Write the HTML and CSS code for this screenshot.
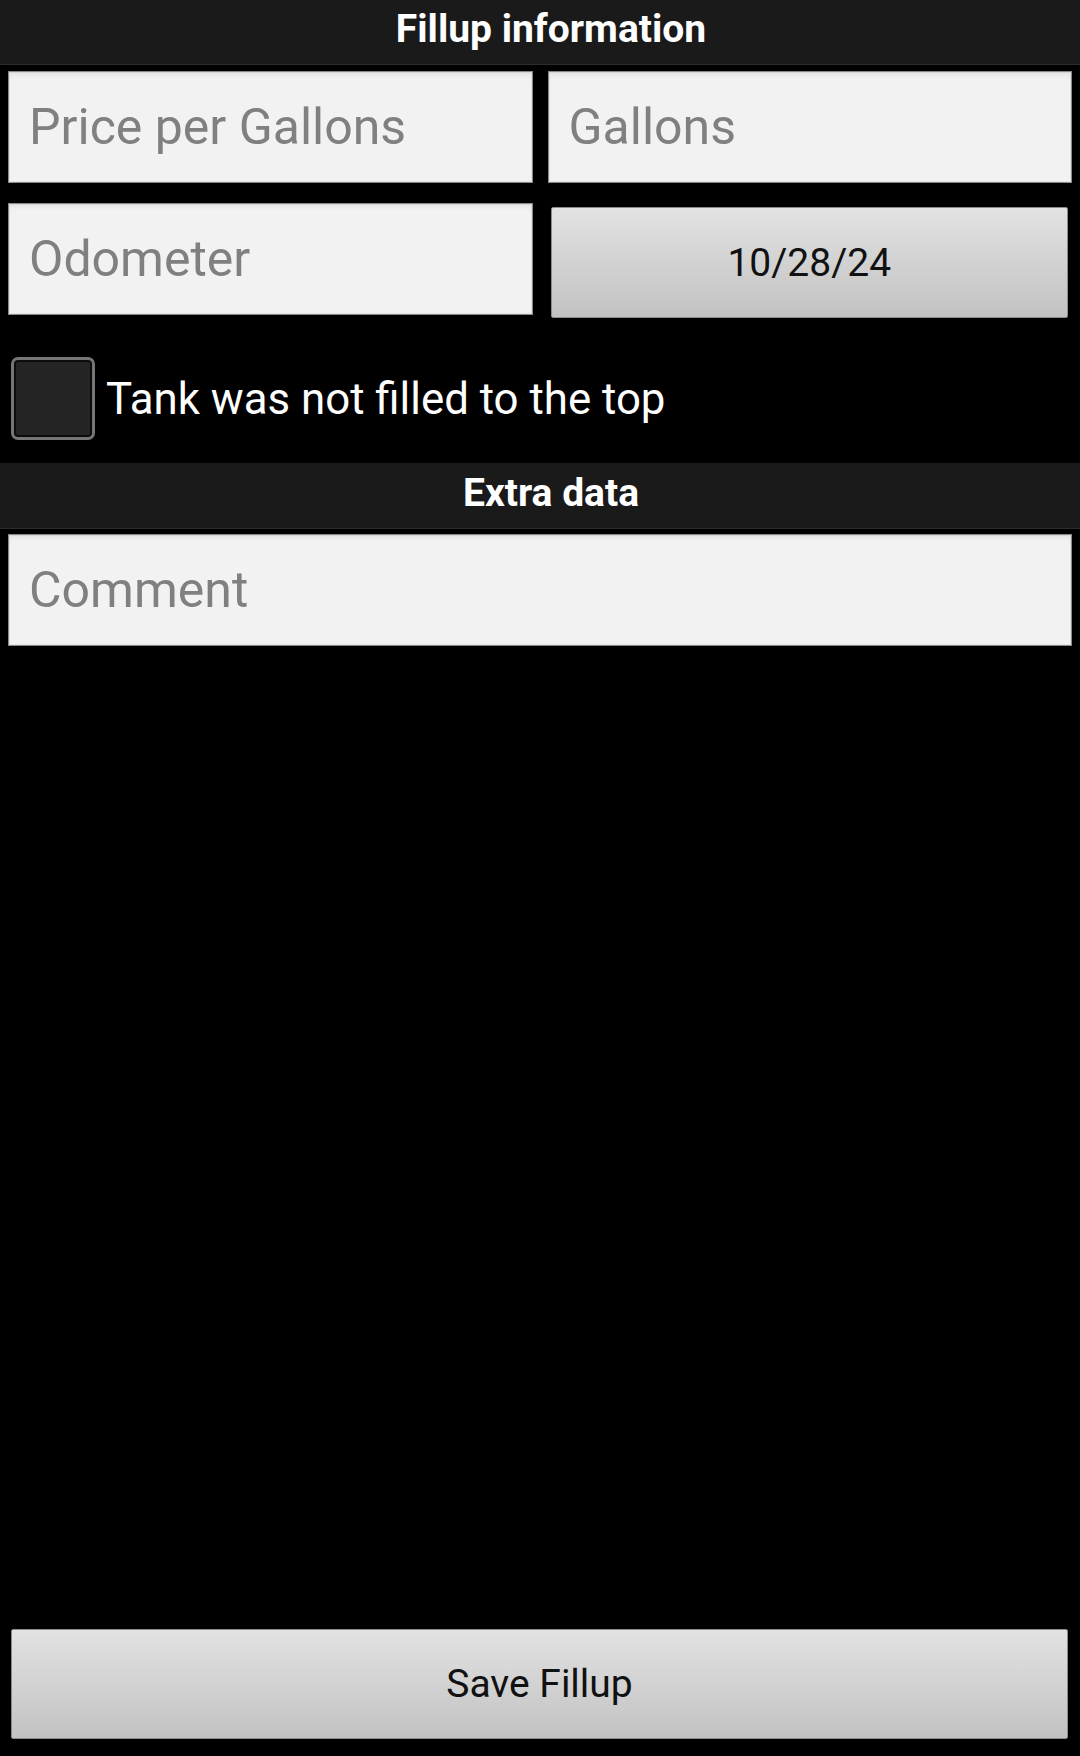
FILE: index.html
```html
<!DOCTYPE html>
<html>
<head>
<meta charset="utf-8">
<link rel="stylesheet" href="styles.css">
</head>
<body>
<div class="screen">
  <div class="section-header">Fillup information</div>
  <div class="row row-first">
    <div class="field"><span class="placeholder">Price per Gallons</span></div>
    <div class="field"><span class="placeholder">Gallons</span></div>
  </div>
  <div class="row row-second">
    <div class="field"><span class="placeholder">Odometer</span></div>
    <div class="btn btn-date">10/28/24</div>
  </div>
  <div class="check-row">
    <div class="checkbox"></div>
    <div class="check-label">Tank was not filled to the top</div>
  </div>
  <div class="section-header section-extra">Extra data</div>
  <div class="row-single">
    <div class="field"><span class="placeholder">Comment</span></div>
  </div>
  <div class="spacer"></div>
  <div class="btn btn-save">Save Fillup</div>
</div>
</body>
</html>
```
FILE: styles.css
```css
html, body {
  margin: 0;
  padding: 0;
  background: #000;
}
body {
  font-family: Roboto, "Noto Sans", sans-serif;
}
.screen {
  width: 1080px;
  height: 1756px;
  display: flex;
  flex-direction: column;
  background: #000;
}
.section-header {
  height: 65px;
  box-sizing: border-box;
  background: #1a1a1a;
  border-bottom: 1px solid #2c2c2c;
  color: #fff;
  font-weight: 700;
  font-size: 39px;
  display: flex;
  align-items: center;
  justify-content: center;
  padding: 0 0 6px 22px;
}
.section-extra {
  margin-top: 23px;
  height: 66px;
}
.row {
  display: grid;
  grid-template-columns: 1fr 1fr;
  column-gap: 15px;
  padding: 0 8px;
}
.row-first {
  margin-top: 6px;
}
.row-second {
  margin-top: 20px;
}
.row-single {
  padding: 0 8px;
  margin-top: 5px;
}
.field {
  height: 112px;
  box-sizing: border-box;
  background: #f2f2f2;
  border: 1px solid #8a8a8a;
  box-shadow: inset 0 5px 6px -3px rgba(0,0,0,0.08), inset 0 0 0 1px #e4e4e4;
  display: flex;
  align-items: center;
  padding-left: 20px;
}
.placeholder {
  font-size: 50px;
  color: #808080;
}
.btn {
  box-sizing: border-box;
  border: 1px solid #8c8c8c;
  border-radius: 2px;
  background: linear-gradient(to bottom, #e2e2e2 0%, #d2d2d2 50%, #c2c2c2 100%);
  color: #111;
  font-size: 39px;
  display: flex;
  align-items: center;
  justify-content: center;
}
.btn-date {
  height: 111px;
  margin: 4px 4px 0 3px;
}
.check-row {
  display: flex;
  align-items: center;
  gap: 11px;
  margin-top: 39px;
  padding-left: 11px;
}
.checkbox {
  width: 84px;
  height: 83px;
  box-sizing: border-box;
  border: 3px solid #767676;
  border-radius: 7px;
  background: #242424;
  box-shadow: inset 0 0 0 2px #0c0c0c;
}
.check-label {
  color: #fff;
  font-size: 43.8px;
}
.spacer {
  flex: 1;
}
.btn-save {
  height: 110px;
  margin: 0 12px 17px 11px;
}
```
